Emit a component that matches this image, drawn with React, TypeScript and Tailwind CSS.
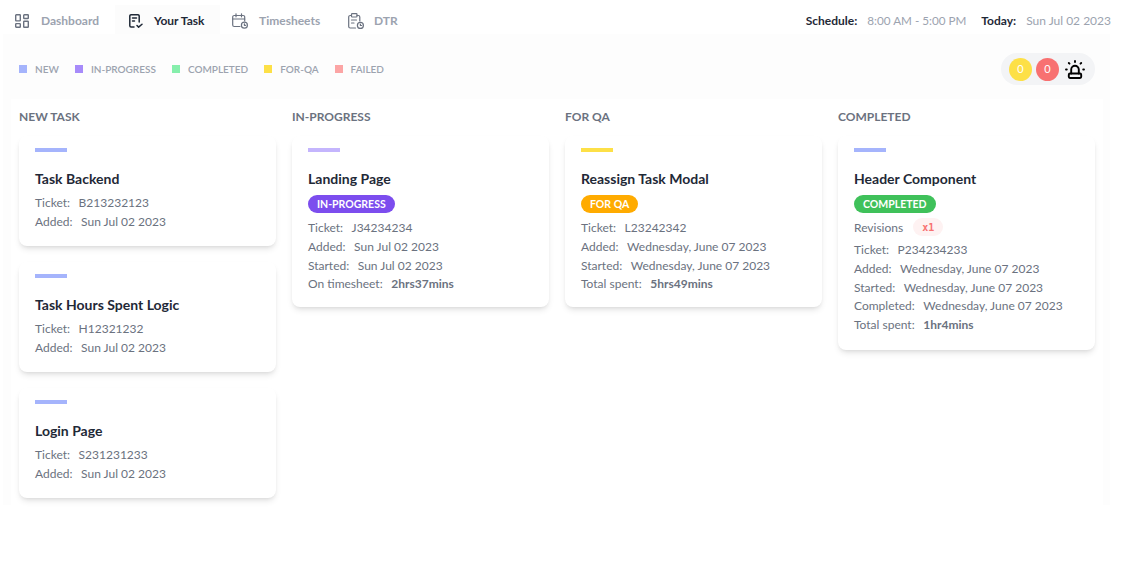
const legend = [
  { label: "NEW", color: "bg-[#a5b4fc]" },
  { label: "IN-PROGRESS", color: "bg-[#a78bfa]" },
  { label: "COMPLETED", color: "bg-[#86efac]" },
  { label: "FOR-QA", color: "bg-[#fde047]" },
  { label: "FAILED", color: "bg-[#fca5a5]" },
];

function DashboardIcon() {
  return (
    <svg width="14" height="14" viewBox="0 0 14 14" fill="none" stroke="currentColor" strokeWidth="1.4">
      <rect x="0.7" y="0.7" width="4.6" height="6.2" rx="0.6" />
      <rect x="8.7" y="0.7" width="4.6" height="3.8" rx="0.6" />
      <rect x="0.7" y="9.6" width="4.6" height="3.7" rx="0.6" />
      <rect x="8.7" y="7.2" width="4.6" height="6.1" rx="0.6" />
    </svg>
  );
}

function TaskIcon() {
  return (
    <svg width="14" height="14" viewBox="0 0 14 14" fill="none" stroke="currentColor" strokeWidth="1.5" strokeLinecap="round" strokeLinejoin="round">
      <path d="M5 13H2a1.2 1.2 0 0 1-1.2-1.2V1.9A1.2 1.2 0 0 1 2 .8h7A1.2 1.2 0 0 1 10.2 1.9V8" />
      <path d="M3.5 4h4M3.5 7h2" />
      <path d="M8 11.5l1.6 1.6L13 10.2" />
    </svg>
  );
}

function TimesheetIcon() {
  return (
    <svg width="16" height="16" viewBox="0 0 16 16" fill="none" stroke="currentColor" strokeWidth="1.2" strokeLinecap="round" strokeLinejoin="round">
      <path d="M8 13.5H2.2A1.5 1.5 0 0 1 .7 12V4a1.5 1.5 0 0 1 1.5-1.5h9A1.5 1.5 0 0 1 12.7 4v4" />
      <path d="M.7 6h12M4 .8v3M9.5 .8v3" />
      <circle cx="12.4" cy="12.2" r="3" />
      <path d="M12.4 10.8v1.5h1.2" />
    </svg>
  );
}

function DtrIcon() {
  return (
    <svg width="16" height="16" viewBox="0 0 16 16" fill="none" stroke="currentColor" strokeWidth="1.2" strokeLinecap="round" strokeLinejoin="round">
      <path d="M7.5 15H2.2A1.5 1.5 0 0 1 .7 13.5V4a1.5 1.5 0 0 1 1.5-1.5h1.3M9 2.5h1.3A1.5 1.5 0 0 1 11.8 4v4" />
      <rect x="3.5" y=".7" width="5.5" height="3.3" rx="0.8" />
      <path d="M3.5 7h5M3.5 10h2.5" />
      <circle cx="12.4" cy="12.4" r="3" />
      <path d="M12.4 11v1.5h1.2" />
    </svg>
  );
}

function SirenIcon() {
  return (
    <svg width="20" height="19" viewBox="0 0 20 19" fill="none" stroke="#000" strokeWidth="1.9" strokeLinecap="round" strokeLinejoin="round">
      <path d="M6.2 13.5V9.5a3.8 3.8 0 0 1 7.6 0v4" />
      <rect x="3.8" y="13.5" width="12.4" height="4.5" rx="1.2" />
      <path d="M10 1v1M3.8 3l.7.7M16.2 3l-.7.7M1 9.5h.8M18.2 9.5h.8" />
    </svg>
  );
}

function NavItem({ icon, label, active, className }: { icon: React.ReactNode; label: string; active?: boolean; className: string }) {
  return (
    <div className={`flex h-[29px] items-center pt-[2px] ${active ? "bg-[#fcfcfc] text-[#1f2937]" : "text-[#6b7280]"} ${className}`}>
      {icon}
      <span className={`text-[12px] font-bold ${active ? "text-[#1f2937]" : "text-[#9ca3af]"}`}>{label}</span>
    </div>
  );
}

type Row = { k: string; v: string; bold?: boolean };

function Card({ bar, title, badge, revisions, rows, pad }: { bar: string; title: string; badge?: React.ReactNode; revisions?: boolean; rows: Row[]; pad: string }) {
  return (
    <div className={`w-[257px] rounded-lg bg-white px-4 pt-3 shadow-md ${pad}`}>
      <div className={`h-1 w-8 ${bar}`} />
      <div className="mt-4 text-[14px] leading-[22px] font-bold text-[#1f2937]">{title}</div>
      {badge}
      {revisions && (
        <div className="mt-[5px] flex h-[18px] items-center text-[12px] text-[#6b7280]">
          <span className="pt-[1px]">Revisions</span>
          <span className="ml-[10px] flex h-[18px] w-[30px] items-center justify-center rounded-full bg-[#fef2f2] font-['DejaVu_Sans_Mono',monospace] text-[10px] font-bold text-[#f87171]">x1</span>
        </div>
      )}
      <div className={`text-[12px] leading-[18.75px] text-[#6b7280] ${revisions ? "mt-[5px]" : badge ? "mt-[6px]" : "mt-1"}`}>
        {rows.map((r) => (
          <div key={r.k}>
            {r.k}: <span className={`ml-[5.5px] ${r.bold ? "font-bold" : ""}`}>{r.v}</span>
          </div>
        ))}
      </div>
    </div>
  );
}

function Badge({ label, color }: { label: string; color: string }) {
  return (
    <div className={`mt-[5px] flex h-[18px] w-fit items-center rounded-full px-[9px] pt-[1px] text-[10.5px] font-bold text-white ${color}`}>{label}</div>
  );
}

function Column({ title, children }: { title: string; children: React.ReactNode }) {
  return (
    <div className="w-[273px] pl-2">
      <div className="mb-[10px] h-[18px] text-[12px] leading-[18px] font-bold text-[#6b7280]">{title}</div>
      <div className="flex flex-col gap-4">{children}</div>
    </div>
  );
}

const NEW_BAR = "bg-[#a5b4fc]";

export default function App() {
  return (
    <div className="h-[581px] bg-white font-['Lato',sans-serif]">
      <div className="flex h-[34px] items-end justify-between pr-[13px] pl-[15px]">
        <div className="flex">
          <NavItem icon={<DashboardIcon />} label="Dashboard" className="w-[100px] gap-3" />
          <NavItem icon={<TaskIcon />} label="Your Task" active className="w-[105px] gap-[11px] pl-[14px]" />
          <NavItem icon={<TimesheetIcon />} label="Timesheets" className="w-[128px] gap-[11px] pl-3" />
          <NavItem icon={<DtrIcon />} label="DTR" className="gap-[10px]" />
        </div>
        <div className="flex h-[29px] items-center pt-[2px] text-[12px]">
          <span className="font-bold text-[#1f2937]">Schedule:</span>
          <span className="ml-[10px] text-[11.7px] text-[#9ca3af]">8:00 AM - 5:00 PM</span>
          <span className="ml-[15px] font-bold text-[#1f2937]">Today:</span>
          <span className="ml-[10px] text-[#9ca3af]">Sun Jul 02 2023</span>
        </div>
      </div>

      <div className="mx-[3px] h-[471px] w-[1107px] bg-[#fdfdfd]">
        <div className="flex h-[65px] items-center justify-between pt-[5px] pr-[15px] pl-4">
          <div className="flex gap-4">
            {legend.map((l) => (
              <div key={l.label} className="flex items-center gap-2 text-[10px] font-semibold text-[#9ca3af]">
                <span className={`h-2 w-2 ${l.color}`} />
                {l.label}
              </div>
            ))}
          </div>
          <div className="flex h-[32px] w-[94px] items-center gap-1 rounded-full bg-[#f3f4f6] pl-2">
            <span className="flex h-[23px] w-[23px] items-center justify-center rounded-full bg-[#fde047] text-[11px] text-white">0</span>
            <span className="flex h-[23px] w-[23px] items-center justify-center rounded-full bg-[#f87171] text-[11px] text-white">0</span>
            <span className="ml-[2px] flex">
              <SirenIcon />
            </span>
          </div>
        </div>

        <div className="ml-2 flex h-[406px] w-[1092px] bg-white pt-[9px]">
          <Column title="NEW TASK">
            <Card bar={NEW_BAR} pad="pb-[14.5px]" title="Task Backend" rows={[{ k: "Ticket", v: "B213232123" }, { k: "Added", v: "Sun Jul 02 2023" }]} />
            <Card bar={NEW_BAR} pad="pb-[14.5px]" title="Task Hours Spent Logic" rows={[{ k: "Ticket", v: "H12321232" }, { k: "Added", v: "Sun Jul 02 2023" }]} />
            <Card bar={NEW_BAR} pad="pb-[14.5px]" title="Login Page" rows={[{ k: "Ticket", v: "S231231233" }, { k: "Added", v: "Sun Jul 02 2023" }]} />
          </Column>
          <Column title="IN-PROGRESS">
            <Card
              bar="bg-[#c4b5fd]"
              pad="pb-[13px]"
              title="Landing Page"
              badge={<Badge label="IN-PROGRESS" color="bg-[#7c4dee]" />}
              rows={[
                { k: "Ticket", v: "J34234234" },
                { k: "Added", v: "Sun Jul 02 2023" },
                { k: "Started", v: "Sun Jul 02 2023" },
                { k: "On timesheet", v: "2hrs37mins", bold: true },
              ]}
            />
          </Column>
          <Column title="FOR QA">
            <Card
              bar="bg-[#fde047]"
              pad="pb-[13px]"
              title="Reassign Task Modal"
              badge={<Badge label="FOR QA" color="bg-[#ffab00]" />}
              rows={[
                { k: "Ticket", v: "L23242342" },
                { k: "Added", v: "Wednesday, June 07 2023" },
                { k: "Started", v: "Wednesday, June 07 2023" },
                { k: "Total spent", v: "5hrs49mins", bold: true },
              ]}
            />
          </Column>
          <Column title="COMPLETED">
            <Card
              bar={NEW_BAR}
              pad="pb-[15px]"
              title="Header Component"
              badge={<Badge label="COMPLETED" color="bg-[#3fc15a]" />}
              revisions
              rows={[
                { k: "Ticket", v: "P234234233" },
                { k: "Added", v: "Wednesday, June 07 2023" },
                { k: "Started", v: "Wednesday, June 07 2023" },
                { k: "Completed", v: "Wednesday, June 07 2023" },
                { k: "Total spent", v: "1hr4mins", bold: true },
              ]}
            />
          </Column>
        </div>
      </div>
    </div>
  );
}
